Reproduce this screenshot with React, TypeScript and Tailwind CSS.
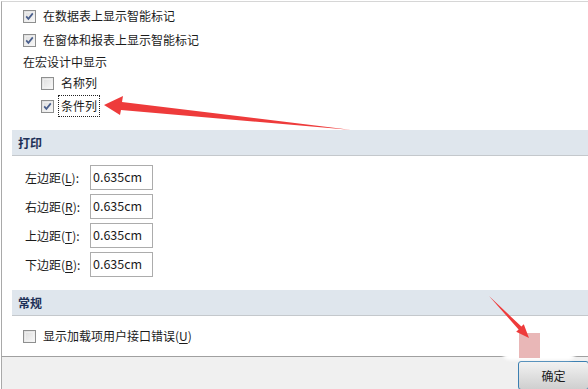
import type { ReactNode } from 'react';

const FONT = { fontFamily: '"Noto Sans CJK SC", "Noto Sans", sans-serif' };

function Checkbox({ checked }: { checked?: boolean }) {
  return (
    <span className="relative w-[13px] h-[13px] shrink-0 border border-[#8e8f8f] bg-gradient-to-br from-[#dcdcdc] to-[#f8f8f8]">
      <span className="absolute inset-[1px] border border-[#f4f4f4]/60" />
      {checked && (
        <svg viewBox="0 0 11 11" className="absolute inset-0 w-[11px] h-[11px]">
          <path d="M2.2 5.4 L4.4 7.9 L8.8 2.4" fill="none" stroke="#4a5f8c" strokeWidth="1.7" />
        </svg>
      )}
    </span>
  );
}

function CheckRow({ checked, label, className }: { checked?: boolean; label: ReactNode; className: string }) {
  return (
    <div className={`flex items-center ${className}`}>
      <Checkbox checked={checked} />
      {label}
    </div>
  );
}

function Band({ title, className }: { title: string; className?: string }) {
  return (
    <div className={`ml-[10px] h-[26px] flex items-center pl-[6px] bg-[#dfe6ed] border-b border-[#c4c8cc] ${className ?? ''}`}>
      <span className="text-[12px] font-bold text-[#1e3158]">{title}</span>
    </div>
  );
}

const margins = [
  { name: '左边距', key: 'L' },
  { name: '右边距', key: 'R' },
  { name: '上边距', key: 'T' },
  { name: '下边距', key: 'B' },
];

export default function App() {
  return (
    <div className="relative w-[588px] h-[389px] overflow-hidden bg-white text-[12px] text-[#1b1b1b]" style={FONT}>
      <div className="h-[355px] border-t border-l border-[#a9a9a9] border-t-[#d6d6d6] mt-[1px] ml-[1px] flex flex-col">
        <div className="pl-[21px] pt-[7px] flex flex-col">
          <CheckRow checked className="h-[14px] gap-[7px]" label={<span>在数据表上显示智能标记</span>} />
          <CheckRow checked className="h-[14px] mt-[10px] gap-[7px]" label={<span>在窗体和报表上显示智能标记</span>} />
          <div className="h-[16px] mt-[7px] flex items-center">在宏设计中显示</div>
          <CheckRow className="h-[14px] mt-[6px] ml-[18px] gap-[7px]" label={<span>名称列</span>} />
          <CheckRow
            checked
            className="h-[14px] mt-[9px] ml-[18px] gap-[4px]"
            label={<span className="px-[2px] py-[3px] border border-dotted border-[#222] leading-[14px]">条件列</span>}
          />
        </div>

        <Band title="打印" className="mt-[17px]" />

        <div className="pl-[23px] pt-[9px] flex flex-col gap-[4px]">
          {margins.map(m => (
            <div key={m.key} className="flex items-center h-[25px]">
              <span className="w-[65px]">
                {m.name}(<span className="underline underline-offset-2">{m.key}</span>):
              </span>
              <div className="w-[63px] h-[25px] border border-[#acacac] flex items-center pl-[2px] text-[12.5px]">0.635cm</div>
            </div>
          ))}
        </div>

        <Band title="常规" className="mt-[13px]" />

        <CheckRow
          className="flex-1 pl-[21px] gap-[7px]"
          label={<span>显示加载项用户接口错误(<span className="underline underline-offset-2">U</span>)</span>}
        />
      </div>

      <div className="h-[34px] border-t border-[#a0a0a0] border-l border-l-[#a9a9a9] ml-[1px] bg-[#f0f0f0] flex justify-end items-end">
        <button className="w-[71px] h-[29px] -mr-[1px] border border-[#3c7fb1] rounded-[3px] bg-gradient-to-b from-[#f2f2f2] to-[#cfcfcf] text-[12px] text-[#1b1b1b]">
          确定
        </button>
      </div>

      {/* watermark smudge */}
      <div className="absolute left-[502px] top-[334px] w-[74px] h-[26px] rounded-[8px] bg-white blur-[1.5px]" />
      <div className="absolute left-[519px] top-[333px] w-[21px] h-[25px] bg-[#e9b7b7]" />

      <svg className="absolute inset-0 pointer-events-none" width="588" height="389">
        <polygon points="104,105 123,96 122,102 352,130 121,110 120,115" fill="#ee3b3b" />
        <polygon points="489,296 521.4,326.6 523.8,324.3 529,338 516.2,331.7 518.6,329.4" fill="#ee3b3b" />
      </svg>
    </div>
  );
}
